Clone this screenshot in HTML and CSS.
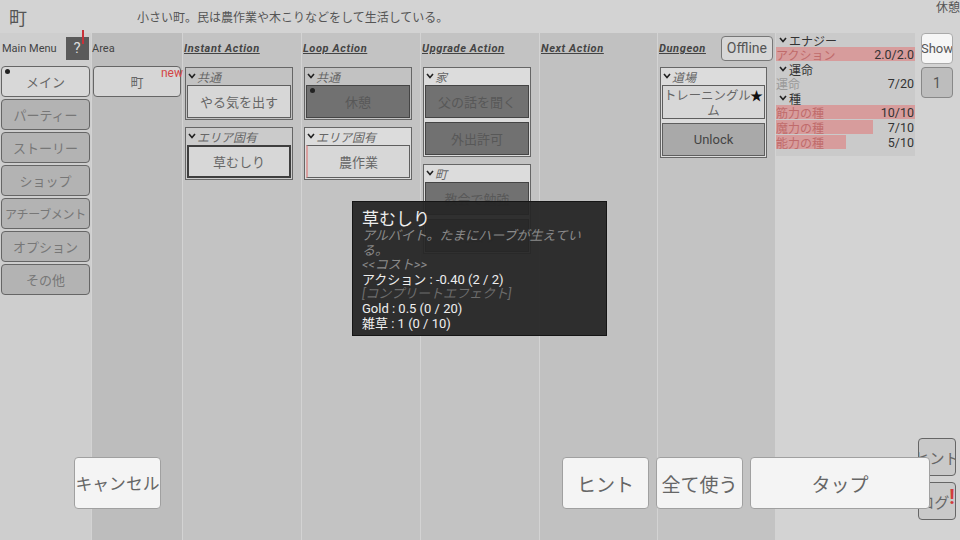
FILE: index.html
```html
<!DOCTYPE html>
<html lang="ja">
<head>
    <meta charset="UTF-8">
    <title>町</title>
    <link rel="stylesheet" href="styles.css">
</head>
<body>
    <div class="top">
        <div class="place">町</div>
        <div class="desc">小さい町。民は農作業や木こりなどをして生活している。</div>
        <div class="state">休憩</div>
    </div>

    <div class="board">
        <!-- メインメニュー -->
        <div class="col col-menu">
            <div class="col-head">
                <span>Main Menu</span>
                <span class="help">?</span>
                <span class="help-mark"></span>
            </div>
            <div class="menu-list">
                <div class="menu-btn active"><span class="dot"></span>メイン</div>
                <div class="menu-btn">パーティー</div>
                <div class="menu-btn">ストーリー</div>
                <div class="menu-btn">ショップ</div>
                <div class="menu-btn narrow">アチーブメント</div>
                <div class="menu-btn">オプション</div>
                <div class="menu-btn">その他</div>
            </div>
        </div>

        <!-- エリア -->
        <div class="col col-area">
            <div class="col-head"><span>Area</span></div>
            <div class="area-btn">町<span class="new">new</span></div>
        </div>

        <div class="col col-action">
            <div class="col-head"><span class="title">Instant Action</span></div>
            <div class="group tone-a">
                <div class="ghead"><svg class="chev" viewBox="0 0 8 6"><polyline points="1,1 4,4.5 7,1"/></svg>共通</div>
                <div class="act">やる気を出す</div>
            </div>
            <div class="group tone-b">
                <div class="ghead"><svg class="chev" viewBox="0 0 8 6"><polyline points="1,1 4,4.5 7,1"/></svg>エリア固有</div>
                <div class="act selected">草むしり</div>
            </div>
        </div>

        <div class="col col-action">
            <div class="col-head"><span class="title">Loop Action</span></div>
            <div class="group tone-a">
                <div class="ghead"><svg class="chev" viewBox="0 0 8 6"><polyline points="1,1 4,4.5 7,1"/></svg>共通</div>
                <div class="act dark"><span class="dot"></span>休憩</div>
            </div>
            <div class="group tone-c">
                <div class="ghead"><svg class="chev" viewBox="0 0 8 6"><polyline points="1,1 4,4.5 7,1"/></svg>エリア固有</div>
                <div class="act marked">農作業</div>
            </div>
        </div>

        <div class="col col-action">
            <div class="col-head"><span class="title">Upgrade Action</span></div>
            <div class="group tone-c">
                <div class="ghead"><svg class="chev" viewBox="0 0 8 6"><polyline points="1,1 4,4.5 7,1"/></svg>家</div>
                <div class="act dark">父の話を聞く</div>
                <div class="act dark">外出許可</div>
            </div>
            <div class="group tone-c">
                <div class="ghead"><svg class="chev" viewBox="0 0 8 6"><polyline points="1,1 4,4.5 7,1"/></svg>町</div>
                <div class="act dark">教会で勉強</div>
                <div class="act dark">見回り</div>
            </div>
        </div>

        <div class="col col-action col-next">
            <div class="col-head"><span class="title">Next Action</span></div>
        </div>

        <div class="col col-action col-dungeon">
            <div class="col-head">
                <span class="title">Dungeon</span>
                <span class="offline">Offline</span>
            </div>
            <div class="group tone-c">
                <div class="ghead"><svg class="chev" viewBox="0 0 8 6"><polyline points="1,1 4,4.5 7,1"/></svg>道場</div>
                <div class="act two-line">トレーニングルーム<span class="star">★</span></div>
                <div class="act mid">Unlock</div>
            </div>
        </div>

        <!-- ステータス -->
        <div class="col col-stats">
            <div class="stats">
                <div class="shead"><svg class="chev" viewBox="0 0 8 6"><polyline points="1,1 4,4.5 7,1"/></svg>エナジー</div>
                <div class="srow">
                    <div class="fill" style="width: 100%"></div>
                    <span class="slabel">アクション</span><span class="sval">2.0/2.0</span>
                </div>
                <div class="shead"><svg class="chev" viewBox="0 0 8 6"><polyline points="1,1 4,4.5 7,1"/></svg>運命</div>
                <div class="srow">
                    <span class="slabel plain">運命</span><span class="sval">7/20</span>
                </div>
                <div class="shead"><svg class="chev" viewBox="0 0 8 6"><polyline points="1,1 4,4.5 7,1"/></svg>種</div>
                <div class="srow">
                    <div class="fill" style="width: 100%"></div>
                    <span class="slabel">筋力の種</span><span class="sval">10/10</span>
                </div>
                <div class="srow">
                    <div class="fill" style="width: 70%"></div>
                    <span class="slabel">魔力の種</span><span class="sval">7/10</span>
                </div>
                <div class="srow">
                    <div class="fill" style="width: 50%"></div>
                    <span class="slabel">能力の種</span><span class="sval">5/10</span>
                </div>
            </div>
        </div>

        <div class="col col-side">
            <div class="side-btn show">Show</div>
            <div class="side-btn num">1</div>
            <div class="side-bottom">
                <div class="side-btn small">ヒント</div>
                <div class="side-btn small">ログ<span class="alert">!</span></div>
            </div>
        </div>
    </div>

    <!-- ツールチップ -->
    <div class="tooltip">
        <div class="tt-title">草むしり</div>
        <div class="tt-note">アルバイト。たまにハーブが生えている。</div>
        <div class="tt-note">&lt;&lt;コスト&gt;&gt;</div>
        <div class="tt-line">アクション : -0.40 (2 / 2)</div>
        <div class="tt-note dim">[コンプリートエフェクト]</div>
        <div class="tt-line">Gold : 0.5 (0 / 20)</div>
        <div class="tt-line">雑草 : 1 (0 / 10)</div>
    </div>

    <!-- 下部ボタン -->
    <div class="bottom-bar">
        <div class="big-btn cancel">キャンセル</div>
        <div class="big-btn hint">ヒント</div>
        <div class="big-btn useall">全て使う</div>
        <div class="big-btn tap">タップ</div>
    </div>
</body>
</html>
```

FILE: styles.css
```css
:root {
    --bg: #d3d3d3;
    --col: #c3c3c3;
    --text: #555;
    --border: #5e5e5e;
}

body {
    margin: 0;
    width: 960px;
    height: 540px;
    overflow: hidden;
    position: relative;
    background: var(--bg);
    font-family: Roboto, "Noto Sans CJK JP", sans-serif;
    color: var(--text);
}

.top {
    height: 33px;
    display: flex;
    align-items: center;
}

.place {
    font-size: 18px;
    width: 128px;
    padding-left: 9px;
    color: #555;
}

.desc {
    font-size: 12px;
    color: #555;
    margin-top: -1px;
}

.state {
    margin-left: auto;
    align-self: flex-start;
    font-size: 12px;
    margin-top: -2px;
    margin-right: 0;
    color: #555;
}

.board {
    display: flex;
    gap: 1px;
    height: 507px;
}

.col {
    display: flex;
    flex-direction: column;
    flex: none;
}

.col-head {
    height: 30px;
    display: flex;
    align-items: center;
    font-size: 11px;
    color: #444;
    position: relative;
    flex: none;
}

.col-head .title {
    font-weight: bold;
    font-style: italic;
    text-decoration: underline;
    letter-spacing: 0.6px;
    padding-left: 1px;
}

.col-menu { width: 91px; background: #cecece; }
.col-area { width: 90px; background: #bdbdbd; }
.col-action { width: 118px; background: var(--col); }
.col-next { width: 117px; background: #c1c1c1; }
.col-dungeon { width: 117px; }
.col-stats { width: 139px; }
.col-side { width: 44px; }

.col-menu .col-head span:first-child { padding-left: 2px; }

.help {
    margin-left: 9px;
    width: 23px;
    height: 23px;
    background: #5a5a5a;
    color: #ddd;
    font-size: 15px;
    display: flex;
    align-items: center;
    justify-content: center;
}

.help-mark {
    position: absolute;
    left: 82px;
    top: -3px;
    width: 2px;
    height: 14px;
    background: #c8323a;
}

.menu-list {
    display: flex;
    flex-direction: column;
    gap: 2px;
    padding: 3px 1px 0 1px;
}

.menu-btn {
    height: 29px;
    border: 1px solid #666;
    border-radius: 4px;
    background: #b3b3b3;
    color: #777;
    font-size: 13px;
    display: flex;
    align-items: center;
    justify-content: center;
    position: relative;
}

.menu-btn.active {
    background: #d8d8d8;
    color: #666;
}

.menu-btn.narrow {
    font-size: 12px;
    letter-spacing: -0.3px;
}

.dot {
    position: absolute;
    left: 3px;
    top: 2px;
    width: 5px;
    height: 5px;
    border-radius: 50%;
    background: #222;
}

.area-btn {
    margin: 3px 1px 0 1px;
    height: 29px;
    border: 1px solid #666;
    border-radius: 4px;
    background: #d6d6d6;
    font-size: 13px;
    color: #666;
    display: flex;
    align-items: center;
    justify-content: center;
    position: relative;
}

.new {
    position: absolute;
    right: -3px;
    top: -1px;
    font-size: 12px;
    color: #d34646;
}

.group {
    margin: 4px 8px 3px 2px;
    border: 1px solid #666;
    padding: 0 1px 1px 1px;
    display: flex;
    flex-direction: column;
    gap: 4px;
}

.tone-a { background: #c2c2c2; }
.tone-b { background: #cbcbcb; }
.tone-c { background: #dcdcdc; }

.ghead {
    height: 16px;
    display: flex;
    align-items: center;
    font-size: 12px;
    font-style: italic;
    color: #666;
    margin-bottom: -3px;
}

.chev {
    width: 8px;
    height: 6px;
    margin: 0 1px 0 1px;
    fill: none;
    stroke: #222;
    stroke-width: 1.6;
}

.act {
    height: 31px;
    border: 1px solid var(--border);
    background: #d7d7d7;
    font-size: 13px;
    color: #666;
    display: flex;
    align-items: center;
    justify-content: center;
    position: relative;
    text-align: center;
}

.act.selected {
    border: 2px solid #3e3e3e;
    height: 29px;
}

.act.dark {
    background: #717171;
    color: #585858;
    border-color: #444;
}

.act.marked {
    border-left: 2px solid #d9a0a0;
}

.act.mid {
    background: #a9a9a9;
    color: #444;
}

.act.two-line {
    font-size: 12.4px;
    line-height: 15px;
    padding-top: 1px;
}

.star {
    position: absolute;
    right: 1px;
    top: 2px;
    color: #111;
    font-size: 13px;
    background: #d7d7d7;
}

.offline {
    margin-left: auto;
    margin-right: 2px;
    height: 23px;
    padding: 0 5px;
    border: 1px solid #777;
    border-radius: 4px;
    background: #d7d7d7;
    color: #555;
    font-size: 14px;
    letter-spacing: 0;
    display: flex;
    align-items: center;
}

.stats {
    background: #cacaca;
    padding-bottom: 6px;
}

.shead {
    height: 14px;
    display: flex;
    align-items: center;
    font-size: 12px;
    color: #333;
    padding-left: 2px;
}

.shead .chev { margin-right: 2px; }

.srow {
    height: 14px;
    position: relative;
    display: flex;
    justify-content: space-between;
    align-items: center;
    font-size: 12.5px;
    margin-bottom: 1px;
}

.fill {
    position: absolute;
    left: 0;
    top: 0;
    bottom: 0;
    background: #d79c9c;
}

.slabel {
    position: relative;
    color: #c06b6b;
    font-size: 12px;
}

.slabel.plain { color: #999; }

.sval {
    position: relative;
    color: #333;
    padding-right: 1px;
}

.side-btn {
    display: flex;
    align-items: center;
    justify-content: center;
    border-radius: 4px;
    overflow: hidden;
    white-space: nowrap;
    position: relative;
}

.side-btn.show {
    margin: 0 7px 3px 5px;
    height: 29px;
    background: #f6f6f6;
    border: 1px solid #aaa;
    font-size: 13px;
    color: #555;
}

.side-btn.num {
    margin: 0 7px 0 5px;
    height: 29px;
    background: #bdbdbd;
    border: 1px solid #888;
    font-size: 14px;
    color: #555;
}

.side-bottom {
    margin-top: auto;
    margin-bottom: 20px;
    display: flex;
    flex-direction: column;
    gap: 6px;
}

.side-btn.small {
    margin: 0 4px 0 2px;
    height: 36px;
    background: #c9c9c9;
    border: 1px solid #666;
    font-size: 15px;
    color: #666;
}

.alert {
    color: #d23c3c;
    font-size: 20px;
    font-weight: bold;
    margin-top: -8px;
}

.tooltip {
    position: absolute;
    left: 352px;
    top: 201px;
    width: 234px;
    height: 117px;
    padding: 8px 10px 8px 9px;
    background: rgba(38, 38, 38, 0.95);
    border: 1px solid #151515;
    color: #eee;
    font-size: 13px;
    line-height: 14.6px;
}

.tt-title {
    font-size: 17px;
    line-height: 18px;
    margin-bottom: 1px;
}

.tt-note {
    font-style: italic;
    color: #8a8a8a;
}

.tt-note.dim { color: #6c6c6c; }

.tt-line { color: #eee; }

.bottom-bar {
    position: absolute;
    left: 0;
    top: 457px;
    width: 930px;
    display: flex;
    gap: 7px;
}

.big-btn {
    height: 50px;
    background: #f4f4f4;
    border: 1px solid #a0a0a0;
    border-radius: 4px;
    font-size: 19px;
    color: #666;
    display: flex;
    align-items: center;
    justify-content: center;
    white-space: nowrap;
    overflow: hidden;
}

.cancel { margin-left: 74px; width: 85px; margin-right: auto; font-size: 16.8px; }
.hint { width: 85px; }
.useall { width: 85px; }
.tap { width: 178px; }
```
